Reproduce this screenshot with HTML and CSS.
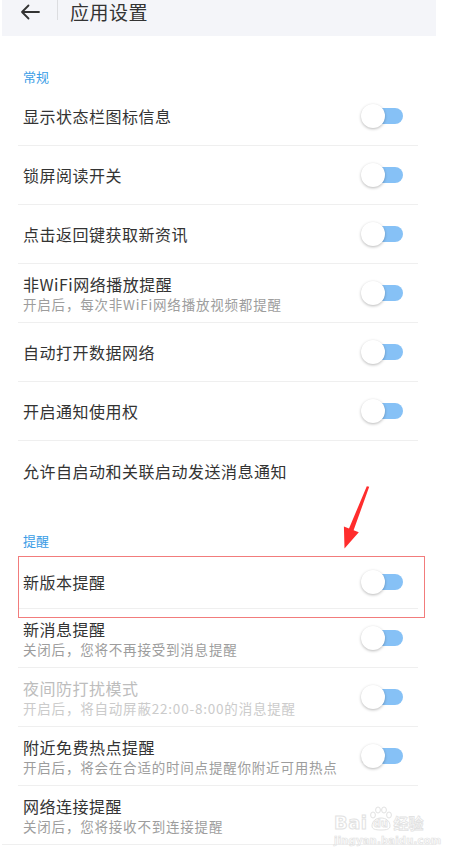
FILE: index.html
```html
<!DOCTYPE html>
<html lang="zh-CN">
<head>
<meta charset="utf-8">
<title>应用设置</title>
<link rel="stylesheet" href="styles.css">
</head>
<body>
<div class="page">
  <header class="topbar">
    <div class="topbar-inner">
      <svg class="back" width="20" height="16" viewBox="0 0 20 16"><path d="M19 8H2M8.5 1.5L2 8l6.5 6.5" fill="none" stroke="#333" stroke-width="1.8" stroke-linecap="round" stroke-linejoin="round"/></svg>
      <span class="vline"></span>
      <h1 class="title">应用设置</h1>
    </div>
  </header>

  <div class="list">
    <div class="section">常规</div>
    <div class="row"><div class="txt"><div class="t">显示状态栏图标信息</div></div><span class="switch"><i></i></span></div>
    <div class="row"><div class="txt"><div class="t">锁屏阅读开关</div></div><span class="switch"><i></i></span></div>
    <div class="row"><div class="txt"><div class="t">点击返回键获取新资讯</div></div><span class="switch"><i></i></span></div>
    <div class="row"><div class="txt"><div class="t">非WiFi网络播放提醒</div><div class="s">开启后，每次非WiFi网络播放视频都提醒</div></div><span class="switch"><i></i></span></div>
    <div class="row"><div class="txt"><div class="t">自动打开数据网络</div></div><span class="switch"><i></i></span></div>
    <div class="row"><div class="txt"><div class="t">开启通知使用权</div></div><span class="switch"><i></i></span></div>
    <div class="row noline"><div class="txt"><div class="t">允许自启动和关联启动发送消息通知</div></div></div>

    <div class="section">提醒</div>
    <div class="row short"><div class="txt"><div class="t">新版本提醒</div></div><span class="switch"><i></i></span></div>
    <div class="row"><div class="txt"><div class="t">新消息提醒</div><div class="s">关闭后，您将不再接受到消息提醒</div></div><span class="switch"><i></i></span></div>
    <div class="row disabled"><div class="txt"><div class="t">夜间防打扰模式</div><div class="s">开启后，将自动屏蔽22:00-8:00的消息提醒</div></div><span class="switch"><i></i></span></div>
    <div class="row"><div class="txt"><div class="t">附近免费热点提醒</div><div class="s">开启后，将会在合适的时间点提醒你附近可用热点</div></div><span class="switch"><i></i></span></div>
    <div class="row noline"><div class="txt"><div class="t">网络连接提醒</div><div class="s">关闭后，您将接收不到连接提醒</div></div></div>
  </div>
  <div class="rule-full"></div>
</div>

<div class="highlight"></div>
<svg class="arrow" width="40" height="70" viewBox="335 482 40 70">
  <polygon fill="#ff2d2d" points="369.2,486.8 366.8,486.2 349.0,528.5 343.9,526.5 344.5,548.5 358.8,532.3 353.6,530.3"/>
</svg>

<div class="watermark">
  <div class="wm-top">
    <span class="wm-bai">Bai</span>
    <span class="wm-paw">
      <svg width="26" height="26" viewBox="0 0 26 26"><g fill="none" stroke="#e2e2e2" stroke-width="1"><ellipse cx="5" cy="9" rx="2.4" ry="3"/><ellipse cx="10" cy="4" rx="2.4" ry="3"/><ellipse cx="16" cy="4" rx="2.4" ry="3"/><ellipse cx="21" cy="9" rx="2.4" ry="3"/><path d="M4 20c0-5 4-8 9-8s9 3 9 8c0 3-3 4-9 4s-9-1-9-4z"/></g></svg>
      <span class="wm-du">du</span>
    </span>
    <span class="wm-jy">经验</span>
  </div>
  <div class="wm-url">jingyan.baidu.com</div>
</div>
</body>
</html>
```

FILE: styles.css
```css
* { box-sizing: border-box; }
html, body { margin: 0; padding: 0; background: #fff; }
body {
  width: 452px;
  height: 860px;
  overflow: hidden;
  font-family: "Noto Sans CJK SC", "Noto Sans", sans-serif;
  color: #333;
  position: relative;
}
.page { margin-left: 2px; width: 434px; }

.topbar { height: 36px; background: #f4f5f9; }
.topbar-inner { display: flex; align-items: center; height: 22px; padding-top: 1px; }
.back { margin-left: 18px; flex: none; }
.vline { width: 1px; height: 20px; background: #dcdde0; margin-left: 17px; align-self: flex-start; margin-top: -1px; }
.title {
  margin: 0 0 0 12px;
  font-size: 19px;
  font-weight: 400;
  letter-spacing: 0.5px;
  line-height: 21px;
  color: #333;
}

.list { padding: 0 18px 0 16px; }
.section {
  padding: 31px 0 0 5px;
  height: 51px;
  font-size: 13px;
  line-height: 20px;
  color: #3a9de6;
}
.list .row.noline + .section { height: 56px; }

.row {
  display: flex;
  align-items: center;
  justify-content: space-between;
  height: 59px;
  padding: 0 15px 0 5px;
  border-bottom: 1px solid #efefef;
}
.row.short { height: 53px; }
.row.noline { border-bottom: none; }
.txt { display: flex; flex-direction: column; }
.t { font-size: 16px; letter-spacing: 0.5px; line-height: 20px; color: #333; }
.s { font-size: 13.5px; letter-spacing: 0.8px; line-height: 18px; margin-top: 1px; color: #9d9d9d; }
.disabled .t { color: #bdbdbd; }
.disabled .s { color: #cbcbcb; }

.switch { position: relative; width: 42px; height: 24px; flex: none; }
.switch::before {
  content: "";
  position: absolute;
  right: 0;
  top: 4px;
  width: 30px;
  height: 16px;
  border-radius: 8px;
  background: #86c1f6;
}
.switch i {
  position: absolute;
  left: 0;
  top: 0;
  width: 24px;
  height: 24px;
  border-radius: 50%;
  background: #fff;
  box-shadow: 0 1px 3px rgba(0,0,0,0.28);
}

.rule-full { height: 1px; background: #efefef; margin-top: -1px; }

.highlight {
  position: absolute;
  left: 18px;
  top: 556px;
  width: 407px;
  height: 62px;
  border: 1.5px solid #f27c7c;
}
.arrow { position: absolute; left: 335px; top: 482px; }

.watermark {
  position: absolute;
  left: 334px;
  top: 800px;
  width: 92px;
  font-family: "DejaVu Sans", sans-serif;
}
.wm-top { display: flex; align-items: flex-end; height: 32px; }
.wm-bai {
  font-size: 18px;
  font-weight: bold;
  line-height: 18px;
  color: transparent;
  -webkit-text-stroke: 1px #e2e2e2;
  letter-spacing: 0.5px;
}
.wm-paw { position: relative; width: 26px; height: 26px; display: inline-block; }
.wm-paw svg { position: absolute; left: 0; top: 0; }
.wm-du {
  position: absolute;
  left: 6px;
  top: 12px;
  font-size: 10px;
  font-weight: bold;
  line-height: 11px;
  color: transparent;
  -webkit-text-stroke: 0.8px #e2e2e2;
}
.wm-jy {
  font-family: "Noto Sans CJK SC", sans-serif;
  font-size: 15px;
  font-weight: bold;
  line-height: 18px;
  color: transparent;
  -webkit-text-stroke: 0.8px #e2e2e2;
}
.wm-url {
  font-size: 10px;
  font-weight: bold;
  line-height: 12px;
  margin-top: 3px;
  color: transparent;
  -webkit-text-stroke: 0.7px #e2e2e2;
  letter-spacing: 0.2px;
}
```
